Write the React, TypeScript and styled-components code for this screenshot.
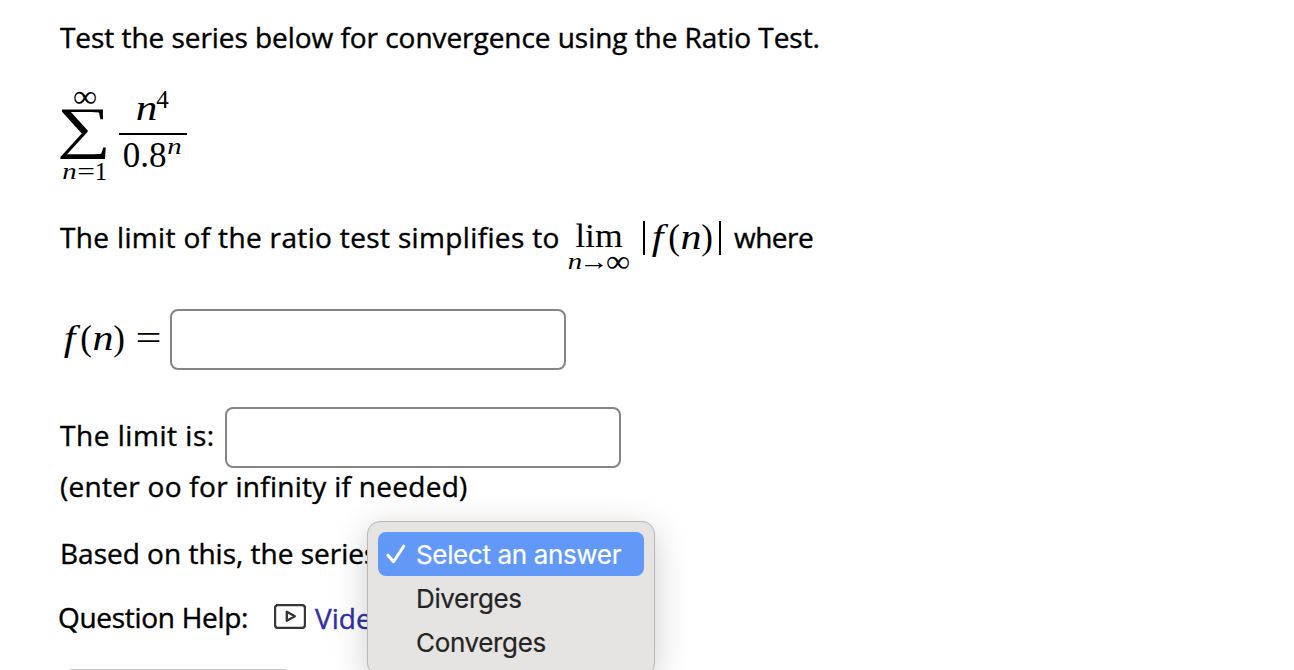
import React from 'react';
import styled, { createGlobalStyle } from 'styled-components';

const GlobalStyle = createGlobalStyle`
    * {
        box-sizing: border-box;
    }

    body {
        margin: 0;
        background: #fff;
        overflow: hidden;
    }
`;

const Page = styled.main`
    position: relative;
    width: 1294px;
    height: 670px;
    padding-left: 60px;
    overflow: hidden;
    display: flex;
    flex-direction: column;
    font-family: 'Open Sans', 'Noto Sans', sans-serif;
    font-size: 28px;
    color: #000;
`;

const Row = styled.div<{ $height: number; $gap?: number; $outdent?: number }>`
    display: flex;
    align-items: center;
    flex: none;
    height: ${({ $height }) => $height}px;
    margin-top: ${({ $gap = 0 }) => $gap}px;
    margin-left: ${({ $outdent = 0 }) => -$outdent}px;
    white-space: pre;
`;

const Text = styled.span<{ $width?: number; $spacing?: number; $lift?: number }>`
    flex: none;
    width: ${({ $width }) => ($width ? `${$width}px` : 'auto')};
    padding-bottom: ${({ $lift = 2 }) => $lift}px;
    letter-spacing: ${({ $spacing = 0 }) => $spacing}px;
    line-height: 38px;
    -webkit-text-stroke: 0.4px currentColor;
`;

const Formula = styled.span<{ $width?: number; $lift?: number }>`
    display: flex;
    align-items: flex-start;
    flex: none;
    width: ${({ $width }) => ($width ? `${$width}px` : 'auto')};
    padding-bottom: ${({ $lift = 0 }) => $lift}px;
`;

const Glyph = styled.span<{
    $width: number;
    $size?: number;
    $italic?: boolean;
    $stretch?: number;
    $drop?: number;
}>`
    display: flex;
    justify-content: center;
    flex: none;
    width: ${({ $width }) => $width}px;
    margin-top: ${({ $drop = 0 }) => $drop}px;
    font-family: 'Liberation Serif', serif;
    font-size: ${({ $size = 35 }) => $size}px;
    font-style: ${({ $italic }) => ($italic ? 'italic' : 'normal')};
    line-height: 1;
    transform: scaleX(${({ $stretch = 1 }) => $stretch});
`;

const Series = styled.div`
    display: flex;
    align-items: flex-start;
    height: 120px;
    padding-top: 10px;
    flex: none;
`;

const Sum = styled.div`
    display: flex;
    flex-direction: column;
    align-items: center;
    width: 49px;
    white-space: nowrap;
`;

const SumLimit = styled.div<{ $height: number }>`
    display: flex;
    align-items: center;
    height: ${({ $height }) => $height}px;
`;

const Sigma = styled.div`
    display: flex;
    align-items: center;
    justify-content: center;
    height: 50px;
    padding-bottom: 11px;
    font-family: 'Liberation Serif', serif;
    font-size: 57px;
    line-height: 50px;
    transform: scaleX(1.33);
`;

const Fraction = styled.div`
    display: flex;
    flex-direction: column;
    width: 68px;
    margin-left: 10px;
`;

const FractionPart = styled.div<{ $height: number; $offset: number }>`
    display: flex;
    align-items: flex-start;
    justify-content: center;
    height: ${({ $height }) => $height}px;
    padding: ${({ $offset }) => $offset}px 2px 0 0;
`;

const FractionBar = styled.div`
    height: 2px;
    background: #000;
`;

const Limit = styled.div`
    display: flex;
    flex-direction: column;
    align-items: center;
    width: 64px;
    margin-right: 12px;
    padding-top: 14px;
`;

const LimitUnder = styled.div`
    display: flex;
    align-items: center;
    height: 18px;
    padding-bottom: 2px;
    white-space: nowrap;
`;

const AbsoluteValue = styled.div`
    display: flex;
    align-items: center;
    justify-content: center;
    width: 78px;
    height: 34px;
    padding: 0 3px 2px 0;
    border: solid #000;
    border-width: 0 2px;
    margin-right: 13px;
`;

const AnswerInput = styled.input`
    flex: none;
    width: 396px;
    height: 61px;
    padding: 8px 12px;
    border: 2px solid #858585;
    border-radius: 8px;
    background: #fff;
    font: inherit;
    outline: none;
`;

const HelpLink = styled.a`
    color: #3030a5;
    text-decoration: none;
`;

const VideoIcon = styled.svg`
    flex: none;
    width: 32px;
    height: 25px;
    margin: 0 9px 3px 0;
`;

const SubmitButton = styled.button`
    width: 230px;
    height: 50px;
    flex: none;
    margin: 32px 0 0 3px;
    border: 2px solid #c4c4c4;
    border-radius: 10px;
    background: #f4f4f4;
`;

const Menu = styled.ul`
    position: absolute;
    left: 367px;
    top: 521px;
    width: 288px;
    height: 155px;
    margin: 0;
    padding: 10px;
    list-style: none;
    border: 1px solid #b9b8b7;
    border-radius: 13px;
    background: #e5e4e2;
    box-shadow: 0 8px 34px rgba(0, 0, 0, 0.2);
`;

const MenuItem = styled.li<{ $selected?: boolean }>`
    display: flex;
    align-items: center;
    height: 44px;
    padding-left: 8px;
    border-radius: 8px;
    background: ${({ $selected }) => ($selected ? '#6299f8' : 'transparent')};
    color: ${({ $selected }) => ($selected ? '#fff' : '#242424')};
    font-family: Inter, sans-serif;
    font-size: 26px;
    letter-spacing: -0.35px;
    white-space: nowrap;
    -webkit-text-stroke: 0.2px currentColor;
`;

const CheckSlot = styled.span`
    display: flex;
    width: 30px;
    flex: none;
`;

const options = ['Select an answer', 'Diverges', 'Converges'];

const FunctionOfN: React.FC = () => (
    <>
        <Glyph $width={19} $italic $stretch={1.2}>f</Glyph>
        <Glyph $width={14}>(</Glyph>
        <Glyph $width={20} $italic $stretch={1.2}>n</Glyph>
        <Glyph $width={12}>)</Glyph>
    </>
);

const App: React.FC = () => (
    <>
        <GlobalStyle />
        <Page>
            <Row $height={76}>
                <Text $spacing={-0.05}>Test the series below for convergence using the Ratio Test.</Text>
            </Row>

            <Series>
                <Sum>
                    <SumLimit $height={22}>
                        <Glyph $width={24} $size={32} $stretch={1.05} $drop={-3}>∞</Glyph>
                    </SumLimit>
                    <Sigma>∑</Sigma>
                    <SumLimit $height={26}>
                        <Glyph $width={15} $size={24} $italic $stretch={1.2}>n</Glyph>
                        <Glyph $width={18} $size={25} $stretch={1.25}>=</Glyph>
                        <Glyph $width={12} $size={25}>1</Glyph>
                    </SumLimit>
                </Sum>
                <Fraction>
                    <FractionPart $height={47} $offset={4}>
                        <Glyph $width={21} $size={36} $italic $stretch={1.2}>n</Glyph>
                        <Glyph $width={12} $size={25} $drop={-3}>4</Glyph>
                    </FractionPart>
                    <FractionBar />
                    <FractionPart $height={40} $offset={3}>
                        <Glyph $width={44}>0.8</Glyph>
                        <Glyph $width={15} $size={24} $italic $stretch={1.2} $drop={-4}>n</Glyph>
                    </FractionPart>
                </Fraction>
            </Series>

            <Row $height={84}>
                <Text $width={507} $spacing={0.35}>The limit of the ratio test simplifies to</Text>
                <Limit>
                    <Glyph $width={48} $size={34} $stretch={1.05}>lim</Glyph>
                    <LimitUnder>
                        <Glyph $width={14} $size={24} $italic $stretch={1.2}>n</Glyph>
                        <Glyph $width={24} $size={25} $stretch={1.2}>→</Glyph>
                        <Glyph $width={24} $size={32} $stretch={1.05}>∞</Glyph>
                    </LimitUnder>
                </Limit>
                <AbsoluteValue>
                    <FunctionOfN />
                </AbsoluteValue>
                <Text $spacing={-0.5}>where</Text>
            </Row>

            <Row $height={119}>
                <Formula $width={110} $lift={3}>
                    <FunctionOfN />
                    <Glyph $width={47} $stretch={1.32}>=</Glyph>
                </Formula>
                <AnswerInput aria-label="f(n)" />
            </Row>

            <Row $height={77}>
                <Text $width={165} $spacing={0.54} $lift={5}>The limit is:</Text>
                <AnswerInput aria-label="The limit is" />
            </Row>
            <Row $height={22}>
                <Text $spacing={0.28}>(enter oo for infinity if needed)</Text>
            </Row>
            <Row $height={38} $gap={37}>
                <Text>Based on this, the series</Text>
            </Row>
            <Row $height={38} $gap={26} $outdent={2}>
                <Text $width={216} $spacing={-0.3}>Question Help:</Text>
                <VideoIcon viewBox="0 0 32 25" fill="none" stroke="#363636">
                    <rect x="1" y="1" width="30" height="23" rx="3" strokeWidth="2.4" />
                    <path d="M12.8 7.8v9l8-4.5z" strokeWidth="2.4" strokeLinejoin="round" />
                </VideoIcon>
                <HelpLink href="#">
                    <Text>Video</Text>
                </HelpLink>
            </Row>
            <SubmitButton type="button" aria-label="Submit" />

            <Menu role="listbox">
                {options.map((label, index) => (
                    <MenuItem key={label} $selected={index === 0}>
                        <CheckSlot>
                            {index === 0 && (
                                <svg width="20" height="22" viewBox="0 0 20 22" fill="none" stroke="#fff">
                                    <path d="M2 12.2l5.5 6.5L17.7 3.2" strokeWidth="3" strokeLinecap="round" strokeLinejoin="round" />
                                </svg>
                            )}
                        </CheckSlot>
                        {label}
                    </MenuItem>
                ))}
            </Menu>
        </Page>
    </>
);

export default App;
